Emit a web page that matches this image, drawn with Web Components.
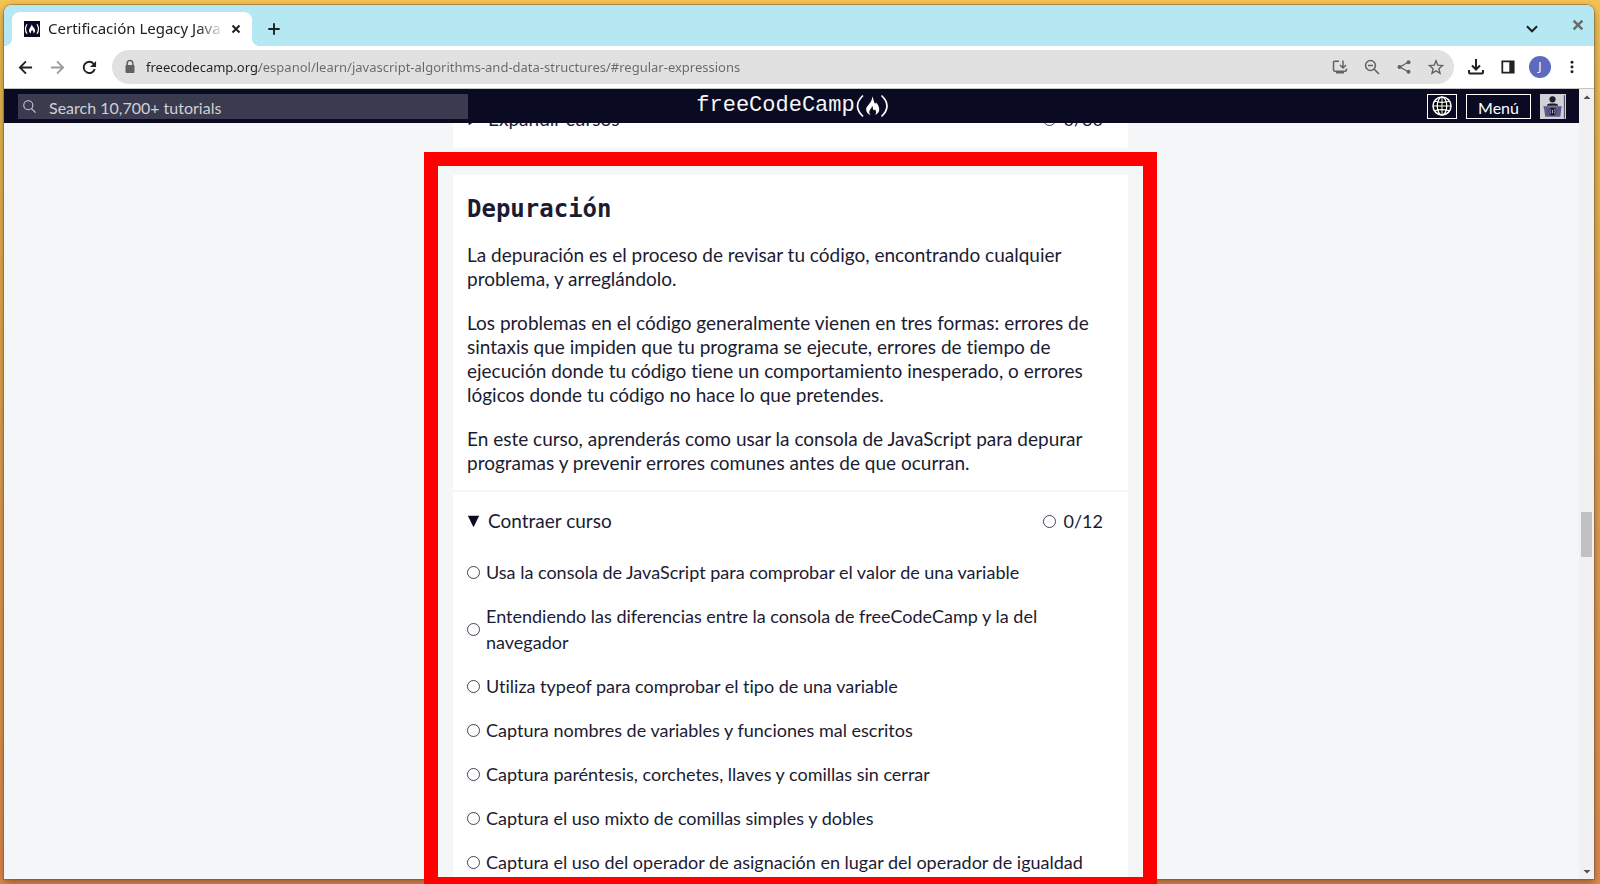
<!DOCTYPE html>
<html lang="es">
<head>
<meta charset="utf-8">
<title>Certificación Legacy JavaScript</title>
<style>
html, body { height: 100%; margin: 0; }
body { overflow: hidden; font-family: Lato, "Noto Sans", sans-serif; font-variant-ligatures: none; color: #1b1b32; }
</style>
</head>
<body>
<desktop-shell>
  <browser-window>
    <tab-strip slot="tabs"></tab-strip>
    <address-toolbar slot="toolbar"></address-toolbar>
    <site-nav slot="page"></site-nav>
    <course-map slot="page">
      <course-block>
        <course-toggle slot="toggle" label="Expandir cursos" count="0/30"></course-toggle>
      </course-block>
      <course-block heading="Depuración">
        <p>La depuración es el proceso de revisar tu código, encontrando cualquier problema, y arreglándolo.</p>
        <p>Los problemas en el código generalmente vienen en tres formas: errores de sintaxis que impiden que tu programa se ejecute, errores de tiempo de ejecución donde tu código tiene un comportamiento inesperado, o errores lógicos donde tu código no hace lo que pretendes.</p>
        <p>En este curso, aprenderás como usar la consola de JavaScript para depurar programas y prevenir errores comunes antes de que ocurran.</p>
        <course-toggle slot="toggle" label="Contraer curso" count="0/12" open></course-toggle>
        <lesson-link slot="lessons">Usa la consola de JavaScript para comprobar el valor de una variable</lesson-link>
        <lesson-link slot="lessons">Entendiendo las diferencias entre la consola de freeCodeCamp y la del navegador</lesson-link>
        <lesson-link slot="lessons">Utiliza typeof para comprobar el tipo de una variable</lesson-link>
        <lesson-link slot="lessons">Captura nombres de variables y funciones mal escritos</lesson-link>
        <lesson-link slot="lessons">Captura paréntesis, corchetes, llaves y comillas sin cerrar</lesson-link>
        <lesson-link slot="lessons">Captura el uso mixto de comillas simples y dobles</lesson-link>
        <lesson-link slot="lessons">Captura el uso del operador de asignación en lugar del operador de igualdad</lesson-link>
      </course-block>
    </course-map>
  </browser-window>
</desktop-shell>

<script>
const define = (name, html, setup) => {
  const template = document.createElement('template');
  template.innerHTML = html;
  customElements.define(name, class extends HTMLElement {
    constructor() {
      super();
      this.attachShadow({ mode: 'open' }).append(template.content.cloneNode(true));
    }
    connectedCallback() { if (setup) setup(this, this.shadowRoot); }
  });
};

const icons = {
  close: '<path d="M4.5 4.5l7 7M11.5 4.5l-7 7" fill="none" stroke="currentColor" stroke-width="2"/>',
  plus: '<path d="M8 1.500v13M1.500 8h13" fill="none" stroke="currentColor" stroke-width="2.200"/>',
  chevron: '<path d="M3.500 5.500L8 10l4.500-4.500" fill="none" stroke="currentColor" stroke-width="1.800"/>',
  back: '<path d="M15 8H2.500M8.500 1.500L2 8l6.500 6.500" fill="none" stroke="currentColor" stroke-width="2"/>',
  forward: '<path d="M1 8h12.500M7.500 1.500L14 8l-6.500 6.500" fill="none" stroke="currentColor" stroke-width="2"/>',
  reload: '<path d="M13.600 9.500A6 6 0 1 1 12.400 4" fill="none" stroke="currentColor" stroke-width="2"/><path d="M15 1v6.500H8.500z" fill="currentColor"/>',
  lock: '<path d="M5.200 7V4.300a2.800 2.800 0 0 1 5.600 0V7" fill="none" stroke="currentColor" stroke-width="1.500"/><rect x="3.500" y="6" width="9" height="8" rx="1" fill="currentColor"/>',
  install: '<path d="M7 2.200H3a1.500 1.500 0 0 0-1.500 1.500v7A1.500 1.500 0 0 0 3 12.200h10a1.500 1.500 0 0 0 1.500-1.500V9.500M11 1.500v7M8 6l3 3 3-3" fill="none" stroke="currentColor" stroke-width="1.500"/><path d="M4 12h8v2.500H4z" fill="currentColor"/>',
  zoomout: '<circle cx="6.500" cy="6.500" r="4.900" fill="none" stroke="currentColor" stroke-width="1.500"/><path d="M10 10l5 5M4 6.500h5" fill="none" stroke="currentColor" stroke-width="1.500"/>',
  share: '<path d="M12.500 3L4 8l8.500 5" fill="none" stroke="currentColor" stroke-width="1.300"/><circle cx="12.500" cy="3.200" r="2" fill="currentColor"/><circle cx="3.500" cy="8" r="2" fill="currentColor"/><circle cx="12.500" cy="12.800" r="2" fill="currentColor"/>',
  star: '<path d="M8 1.800l1.800 4.400 4.700.4-3.600 3.100 1.100 4.600L8 11.800l-4 2.500 1.100-4.600-3.600-3.100 4.700-.4z" fill="none" stroke="currentColor" stroke-width="1.400"/>',
  download: '<path d="M8 0v10M4 6.500l4 4 4-4M1 11v2.500a1 1 0 0 0 1 1h12a1 1 0 0 0 1-1V11" fill="none" stroke="currentColor" stroke-width="2"/>',
  panel: '<path d="M.5.500h15v15H.5zM2.500 2.500v11h7v-11z" fill="currentColor" fill-rule="evenodd"/>',
  dots: '<circle cx="8" cy="2.500" r="1.700" fill="currentColor"/><circle cx="8" cy="8" r="1.700" fill="currentColor"/><circle cx="8" cy="13.500" r="1.700" fill="currentColor"/>',
  magnifier: '<circle cx="6.500" cy="6.500" r="5.600" fill="none" stroke="currentColor" stroke-width="1.300"/><path d="M10.500 10.500l5 5" fill="none" stroke="currentColor" stroke-width="1.300"/>',
  circle: '<circle cx="8" cy="8" r="7.400" fill="none" stroke="currentColor" stroke-width="1"/>',
  down: '<path d="M1 1h14L8 15z" fill="currentColor"/>',
  right: '<path d="M2 1v14l11-7z" fill="currentColor"/>',
  scrollup: '<path d="M1 12l7-7 7 7z" fill="currentColor"/>',
  scrolldown: '<path d="M1 4l7 7 7-7z" fill="currentColor"/>',
  globe: '<circle cx="8" cy="8" r="7.300" fill="#000"/><g fill="none" stroke="currentColor"><circle cx="8" cy="8" r="7.200" stroke-width="1.200"/><path d="M8 .8v14.400M.8 8h14.400" stroke-width=".8"/><path d="M2 4.200q6 1.800 12 0M2 11.800q6-1.800 12 0" stroke-width="1"/><ellipse cx="8" cy="8" rx="3.800" ry="7.200" stroke-width="1"/></g>',
  favicon: '<path d="M0 0h16v16H0z" fill="#0a0a23"/><path d="M3 3.200q-3 4.800 0 9.600M13 3.200q3 4.800 0 9.600" fill="none" stroke="#fff" stroke-width="1.200"/><path d="M7.800 3.200c.4 2.600 3.400 4 3.300 6.300 0 1.500-.8 2.400-1.800 3 .5-1.400 0-2.500-1.300-3.700-.4 1.500-1.600 2.200-1 3.700-1.200-.6-2-1.600-2-3C5 7 7.400 6 7.800 3.200z" fill="#fff"/>',
  avatar: '<path d="M0 0h16v16H0z" fill="#d0d0d5"/><circle cx="7.700" cy="3.300" r="1.900" fill="#1b1b32"/><path d="M4.200 7.200q0-1.200 2-1.400h3q2 .2 2 1.400z" fill="#1b1b32"/><path d="M2 7.600h11.500l-.5 2-.5 4.400H3.200l-.6-4.400z" fill="#5a5a8c"/><circle cx="7.700" cy="10.800" r="2.400" fill="#1b1b32"/><path d="M6.400 9.400q-.7 1.400 0 2.800M9 9.400q.7 1.400 0 2.800M7.700 9.800v2" fill="none" stroke="#d0d0d5" stroke-width=".5"/><path d="M14.700.7h.6v14.600h-.6z" fill="#3b3b4f"/>'
};

define('ui-icon', `
<style>
:host { display: inline-flex; flex: none; width: var(--size, 16px); height: var(--size, 16px); }
svg { width: 100%; height: 100%; display: block; overflow: visible; }
</style><svg viewBox="0 0 16 16" aria-hidden="true"></svg>`,
(el, root) => { root.querySelector('svg').innerHTML = icons[el.getAttribute('name')]; });

define('desktop-shell', `
<style>
:host {
  display: grid; box-sizing: border-box; height: 100vh;
  padding: 5px 6px 5px 4px; position: relative; overflow: hidden;
  background: linear-gradient(#f3c354 0%, #e9b850 12%, #e2a04c 50%, #e08a4d 100%);
}
.highlight { position: absolute; inset: 152px 23px -7px 4px; pointer-events: none; display: flex; justify-content: center; }
.frame { box-sizing: border-box; width: 733px; border: 14px solid #f00; }
</style>
<slot></slot>
<div class="highlight"><div class="frame"></div></div>`);

define('browser-window', `
<style>
:host {
  display: grid; grid-template-rows: auto auto minmax(0, 1fr); min-height: 0; min-width: 0;
  border-radius: 8px 8px 0 0; background: #fff; overflow: clip;
  box-shadow: 0 0 0 1px #7a5a3a80, 0 3px 8px #0006;
}
.view { display: grid; grid-template-columns: minmax(0, 1fr) 15px; min-height: 0; border-top: 1px solid #c4c4c8; }
.page { display: flex; flex-direction: column; min-height: 0; background: #f5f6f7; }
.bar { background: #f1f1f1; display: grid; grid-template-rows: 16px 407fr 45px 308fr 14px; justify-items: center; align-items: center; color: #505050; --size: 8px; }
.thumb { width: 11px; height: 45px; background: #c1c1c1; grid-row: 3; }
.last { grid-row: 5; }
</style>
<slot name="tabs"></slot>
<slot name="toolbar"></slot>
<div class="view">
  <div class="page"><slot name="page"></slot></div>
  <div class="bar"><ui-icon name="scrollup"></ui-icon><div class="thumb"></div><ui-icon class="last" name="scrolldown"></ui-icon></div>
</div>`);

define('tab-strip', `
<style>
:host { display: flex; box-sizing: border-box; height: 41px; padding: 7px 0 0 8px; background: #b5e8f2; font-family: "Noto Sans", sans-serif; color: #202124; }
button { border: 0; background: none; padding: 0; color: inherit; display: flex; align-items: center; justify-content: center; width: 32px; height: 34px; }
.tab { position: relative; box-sizing: border-box; width: 240px; height: 34px; background: #fff; border-radius: 8px 8px 0 0; display: flex; align-items: center; padding-left: 12px; }
.tab::before, .tab::after { content: ""; position: absolute; bottom: 0; width: 8px; height: 8px; }
.tab::before { right: 100%; background: radial-gradient(circle at 0 0, transparent 8px, #fff 8px); }
.tab::after { left: 100%; background: radial-gradient(circle at 100% 0, transparent 8px, #fff 8px); }
.title { margin-left: 8px; width: 172px; height: 22px; font-size: 15px; line-height: 20px; white-space: nowrap; overflow: hidden; mask-image: linear-gradient(90deg, #000 150px, transparent 176px); }
.tab button { --size: 16px; }
.add { --size: 14px; margin-left: 6px; }
.fill { flex: 1; }
.list { margin-right: 14px; --size: 18px; }
.exit { color: #6b6b6b; height: 26px; --size: 20px; }
</style>
<div class="tab"><ui-icon name="favicon"></ui-icon><div class="title">Certificación Legacy JavaScript</div><button aria-label="Cerrar pestaña"><ui-icon name="close"></ui-icon></button></div>
<button class="add" aria-label="Nueva pestaña"><ui-icon name="plus"></ui-icon></button>
<div class="fill"></div>
<button class="list" aria-label="Buscar pestañas"><ui-icon name="chevron"></ui-icon></button>
<button class="exit" aria-label="Cerrar ventana"><ui-icon name="close"></ui-icon></button>`);

define('address-toolbar', `
<style>
:host { display: flex; align-items: center; box-sizing: border-box; height: 42px; padding: 0 6px 0 5px; font-family: "Noto Sans", sans-serif; color: #202124; }
button { border: 0; background: none; padding: 0; color: inherit; display: flex; align-items: center; justify-content: center; width: 32px; height: 32px; }
.off { color: #9b9b9e; }
.omnibox { flex: 1; min-width: 0; height: 34px; margin-left: 7px; margin-right: 6px; border-radius: 17px; background: #e1e1e1; display: flex; align-items: center; padding: 0 2px 0 10px; color: #5f6368; }
input {
  flex: 1; min-width: 0; border: 0; outline: 0; padding: 0; margin-left: 8px; height: 34px;
  font: 13px/20px "Noto Sans", sans-serif; color: transparent;
  background: linear-gradient(90deg, #202124 113px, #66686c 113px); background-clip: text; -webkit-background-clip: text;
}
.user { width: 22px; height: 22px; border-radius: 50%; background: #5c6bc0; color: #fff; font: 12px/22px "Noto Sans", sans-serif; margin: 0 5px; }
.nav { display: flex; --size: 15px; }
</style>
<div class="nav">
<button aria-label="Atrás"><ui-icon name="back"></ui-icon></button>
<button class="off" aria-label="Adelante"><ui-icon name="forward"></ui-icon></button>
<button aria-label="Recargar"><ui-icon name="reload"></ui-icon></button>
</div>
<div class="omnibox">
  <ui-icon name="lock"></ui-icon>
  <input aria-label="Dirección" value="freecodecamp.org/espanol/learn/javascript-algorithms-and-data-structures/#regular-expressions">
  <button aria-label="Instalar"><ui-icon name="install"></ui-icon></button>
  <button aria-label="Zoom"><ui-icon name="zoomout"></ui-icon></button>
  <button aria-label="Compartir"><ui-icon name="share"></ui-icon></button>
  <button aria-label="Favorito"><ui-icon name="star"></ui-icon></button>
</div>
<button aria-label="Descargas"><ui-icon name="download"></ui-icon></button>
<button aria-label="Panel lateral"><ui-icon name="panel" style="--size:14px"></ui-icon></button>
<button class="user">J</button>
<button aria-label="Más"><ui-icon name="dots" style="--size:14px"></ui-icon></button>`);

define('site-nav', `
<style>
:host { position: relative; z-index: 1; flex: none; display: grid; grid-template-columns: 1fr auto 1fr; align-items: center; box-sizing: border-box; height: 34px; padding: 0 13px 0 14px; background: #0a0a23; color: #f5f6f7; }
.search { box-sizing: border-box; width: 450px; max-width: 100%; height: 25px; background: #3b3b4f; display: flex; align-items: center; padding-left: 5px; gap: 13px; color: #d0d0d5; --size: 13px; }
input { flex: 1; min-width: 0; height: 25px; border: 0; outline: 0; padding: 2px 0 0; box-sizing: border-box; background: none; color: inherit; font: 16px/23px Lato, sans-serif; }
input::placeholder { color: #d0d0d5; opacity: 1; }
.brand { display: flex; align-items: center; color: #f5f6f7; text-decoration: none; font: 22px/30px "Liberation Mono", monospace; }
.actions { display: flex; justify-content: flex-end; gap: 9px; }
button { box-sizing: border-box; height: 25px; border: 1px solid #fff; background: #0a0a23; color: #fff; padding: 0; display: flex; align-items: center; justify-content: center; }
.lang { width: 30px; --size: 20px; }
.menu { width: 65px; padding-top: 2px; font: 16px/21px Lato, sans-serif; }
.avatar { width: 26px; height: 25px; overflow: hidden; display: block; --size: 26px; }
</style>
<label class="search"><ui-icon name="magnifier"></ui-icon><input type="search" placeholder="Search 10,700+ tutorials" aria-label="Search"></label>
<a class="brand" href="#">freeCodeCamp<svg width="33" height="24" viewBox="0 0 33 24" aria-hidden="true"><path d="M8 1.500Q-3 12 8 22.500M26.500 1.500q11 10.500 0 21" fill="none" stroke="#fff" stroke-width="1.700"/><path transform="translate(7 2) scale(1.180)" fill="#fff" d="M8.600.5c1.600 2 .9 4 2.200 5.600.5.600 1.200.4 1-.700 1.800 2 3 4.400 2.800 6.900-.2 1.500-1.600 2.800-3.400 3.700 1-1.600 1-3.400-.3-4.800-.3.800-.8 1-1.200.6-.7-.8-.1-2-1.200-3.600-.2 2.400-2.500 3.600-2.300 5.700.1 1 .6 1.700 1.200 2.200-2.200-.7-4-2.500-3.900-4.900C3.600 8.300 9 5.500 8.600.5z"/></svg></a>
<div class="actions">
  <button class="lang" aria-label="Idioma"><ui-icon name="globe"></ui-icon></button>
  <button class="menu">Menú</button>
  <a class="avatar" href="#" aria-label="Perfil"><ui-icon name="avatar"></ui-icon></a>
</div>`);

define('course-map', `
<style>
:host { flex: 1; min-height: 0; overflow: hidden; display: block; padding-right: 2px; }
.column { width: 675px; max-width: 100%; margin: -33px auto 0; display: grid; gap: 27px; }
</style>
<div class="column"><slot></slot></div>`);

define('course-block', `
<style>
:host { display: block; background: #fff; }
.intro { padding: 20px 14px 15px; display: grid; gap: 20px; border-bottom: 2px solid #f5f6f7; font-size: 19px; line-height: 24px; }
.intro[hidden] { display: none; }
h2 { margin: 0; font: bold 24px/28px "DejaVu Sans Mono", monospace; }
::slotted(p) { margin: 0; }
</style>
<div class="intro"><h2></h2><slot></slot></div>
<slot name="toggle"></slot>
<slot name="lessons"></slot>`,
(el, root) => {
  const heading = el.getAttribute('heading');
  if (heading) root.querySelector('h2').textContent = heading;
  else root.querySelector('.intro').hidden = true;
});

define('course-toggle', `
<style>
:host { display: block; }
button { box-sizing: border-box; width: 100%; height: 58px; border: 0; background: none; padding: 0 25px 0 14px; display: flex; align-items: center; font: 19px/26px Lato, sans-serif; color: #1b1b32; }
.arrow { --size: 13px; color: #0a0a23; margin-right: 8px; }
.state { --size: 13px; margin-left: auto; margin-right: 8px; }
.count { font-size: 18px; }
</style>
<button><ui-icon class="arrow" name="right"></ui-icon><span class="label"></span><ui-icon class="state" name="circle"></ui-icon><span class="count"></span></button>`,
(el, root) => {
  root.querySelector('button').setAttribute('aria-expanded', el.hasAttribute('open'));
  root.querySelector('.label').textContent = el.getAttribute('label');
  root.querySelector('.count').textContent = el.getAttribute('count');
  if (el.hasAttribute('open')) {
    const arrow = document.createElement('ui-icon');
    arrow.className = 'arrow';
    arrow.setAttribute('name', 'down');
    root.querySelector('.arrow').replaceWith(arrow);
  }
});

define('lesson-link', `
<style>
:host { display: block; }
a { display: flex; align-items: center; gap: 6px; padding: 9px 14px; font-size: 18px; line-height: 26px; color: #1b1b32; text-decoration: none; --size: 13px; }
</style>
<a href="#"><ui-icon name="circle"></ui-icon><span><slot></slot></span></a>`);
</script>
</body>
</html>
